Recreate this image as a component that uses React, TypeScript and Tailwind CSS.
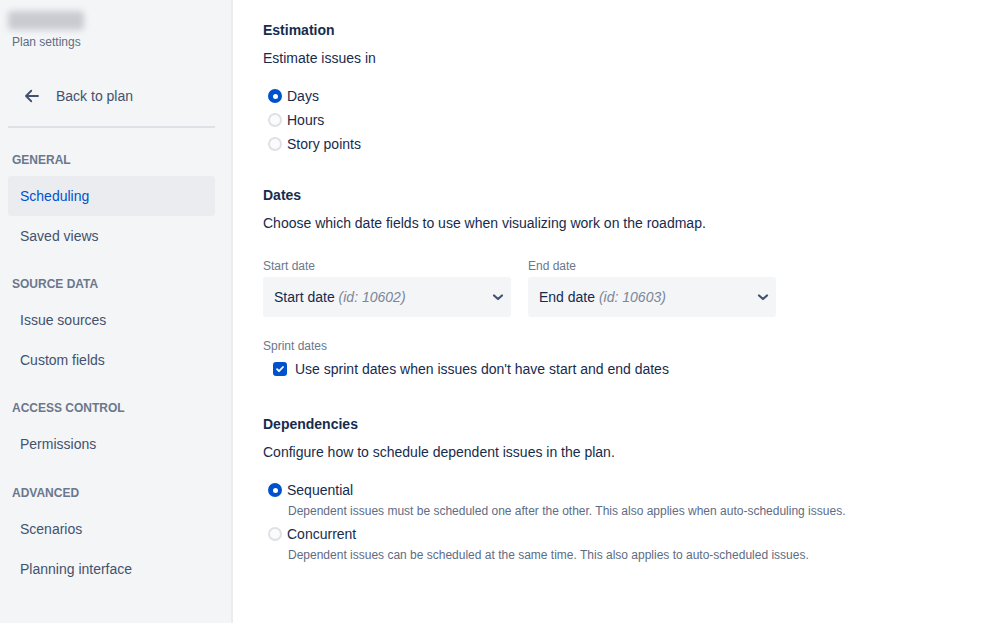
import React from "react";

const font = { fontFamily: '"Liberation Sans", Arial, sans-serif' };

function SideHeading({ children }: { children: React.ReactNode }) {
  return (
    <div className="pl-[12px] pt-[20px] pb-[8px] text-[12px] leading-[16px] font-semibold text-[#6B778C] uppercase">
      {children}
    </div>
  );
}

function SideItem({ children, active }: { children: React.ReactNode; active?: boolean }) {
  return (
    <div
      className={
        "ml-[8px] w-[207px] h-[40px] flex items-center pl-[12px] rounded-[3px] text-[14px] " +
        (active ? "bg-[#EBECF0] text-[#0052CC]" : "text-[#42526E]")
      }
    >
      {children}
    </div>
  );
}

function Radio({ checked }: { checked?: boolean }) {
  return checked ? (
    <span className="w-[14px] h-[14px] rounded-full bg-[#0052CC] flex items-center justify-center shrink-0">
      <span className="w-[5px] h-[5px] rounded-full bg-white" />
    </span>
  ) : (
    <span className="w-[14px] h-[14px] rounded-full bg-[#FAFBFC] border-2 border-[#DFE1E6] shrink-0" />
  );
}

function RadioRow({ label, checked }: { label: string; checked?: boolean }) {
  return (
    <div className="h-[24px] flex items-center pl-[5px] gap-[5px] text-[14px] text-[#172B4D]">
      <Radio checked={checked} />
      <span>{label}</span>
    </div>
  );
}

function Chevron() {
  return (
    <svg width="24" height="24" viewBox="0 0 24 24" className="shrink-0">
      <path d="M8 10.5l4 3.5 4-3.5" fill="none" stroke="#42526E" strokeWidth="2.2" strokeLinecap="round" strokeLinejoin="round" />
    </svg>
  );
}

function Select({ name, id }: { name: string; id: string }) {
  return (
    <div className="w-[248px] h-[40px] bg-[#F4F5F7] rounded-[3px] flex items-center pl-[11px] pr-[1px] justify-between">
      <span className="text-[14px] text-[#172B4D]">
        {name} <i className="text-[#7A869A]">(id: {id})</i>
      </span>
      <Chevron />
    </div>
  );
}

export default function App() {
  return (
    <div className="w-[999px] h-[623px] flex bg-white overflow-hidden" style={font}>
      <aside className="w-[233px] h-full bg-[#F4F5F7] border-r-2 border-[#EBECF0] shrink-0 flex flex-col">
        <div className="pl-[8px] pt-[11px]">
          <div className="w-[76px] h-[19px] rounded-[4px] bg-[#c9cbd1] blur-[3px]" />
        </div>
        <div className="pl-[12px] mt-[4px] text-[12px] leading-[16px] text-[#5E6C84]">Plan settings</div>
        <div className="mt-[26px] h-[40px] flex items-center pl-[23px] text-[14px] text-[#42526E]">
          <svg width="18" height="18" viewBox="0 0 24 24" className="mr-[15px]">
            <path d="M20 12H5M11 5l-7 7 7 7" fill="none" stroke="#42526E" strokeWidth="2.4" strokeLinecap="round" strokeLinejoin="round" />
          </svg>
          Back to plan
        </div>
        <div className="ml-[8px] w-[207px] mt-[10px] h-[2px] bg-[#DFE1E6]" />
        <div className="pl-[12px] pt-[24px] pb-[8px] text-[12px] leading-[16px] font-semibold text-[#6B778C]">GENERAL</div>
        <SideItem active>Scheduling</SideItem>
        <SideItem>Saved views</SideItem>
        <SideHeading>Source data</SideHeading>
        <SideItem>Issue sources</SideItem>
        <SideItem>Custom fields</SideItem>
        <SideHeading>Access control</SideHeading>
        <SideItem>Permissions</SideItem>
        <div className="pl-[12px] pt-[21px] pb-[8px] text-[12px] leading-[16px] font-semibold text-[#6B778C] uppercase">
          Advanced
        </div>
        <SideItem>Scenarios</SideItem>
        <SideItem>Planning interface</SideItem>
      </aside>

      <main className="flex-1 pl-[30px] pt-[20px] text-[#172B4D]">
        <h2 className="text-[14px] leading-[20px] font-semibold">Estimation</h2>
        <p className="mt-[8px] text-[14px] leading-[20px]">Estimate issues in</p>
        <div className="mt-[16px] flex flex-col">
          <RadioRow label="Days" checked />
          <RadioRow label="Hours" />
          <RadioRow label="Story points" />
        </div>

        <h2 className="mt-[29px] text-[14px] leading-[20px] font-semibold">Dates</h2>
        <p className="mt-[8px] text-[14px] leading-[20px]">
          Choose which date fields to use when visualizing work on the roadmap.
        </p>
        <div className="mt-[25px] flex gap-[17px]">
          <div>
            <div className="text-[12px] leading-[16px] text-[#6B778C] mb-[3px]">Start date</div>
            <Select name="Start date" id="10602" />
          </div>
          <div>
            <div className="text-[12px] leading-[16px] text-[#6B778C] mb-[3px]">End date</div>
            <Select name="End date" id="10603" />
          </div>
        </div>
        <div className="mt-[21px] text-[12px] leading-[16px] text-[#6B778C]">Sprint dates</div>
        <div className="mt-[3px] h-[24px] flex items-center pl-[10px] gap-[8px] text-[14px]">
          <span className="w-[14px] h-[14px] rounded-[3px] bg-[#0052CC] flex items-center justify-center">
            <svg width="10" height="10" viewBox="0 0 10 10">
              <path d="M2 5.2l2 2 4-4.2" fill="none" stroke="white" strokeWidth="1.8" strokeLinecap="round" strokeLinejoin="round" />
            </svg>
          </span>
          <span>Use sprint dates when issues don't have start and end dates</span>
        </div>

        <h2 className="mt-[33px] text-[14px] leading-[20px] font-semibold">Dependencies</h2>
        <p className="mt-[8px] text-[14px] leading-[20px]">Configure how to schedule dependent issues in the plan.</p>
        <div className="mt-[16px] flex flex-col">
          <RadioRow label="Sequential" checked />
          <div className="pl-[25px] pt-[1px] mb-[3px] text-[12px] leading-[16px] text-[#5E6C84]">
            Dependent issues must be scheduled one after the other. This also applies when auto-scheduling issues.
          </div>
          <RadioRow label="Concurrent" />
          <div className="pl-[25px] pt-[1px] text-[12px] leading-[16px] text-[#5E6C84]">
            Dependent issues can be scheduled at the same time. This also applies to auto-scheduled issues.
          </div>
        </div>
      </main>
    </div>
  );
}
